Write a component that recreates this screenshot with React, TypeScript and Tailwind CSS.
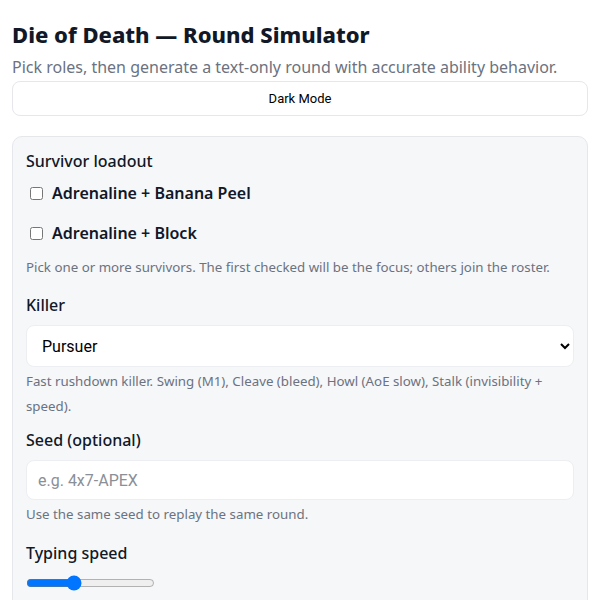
import { useState } from "react";

export default function App() {
  const [speed, setSpeed] = useState(35);
  const [killer, setKiller] = useState("pursuer");

  return (
    <div className="min-h-screen bg-white px-3 pt-[19px] font-['Noto_Sans',sans-serif] text-[#111827]">
      <h1 className="text-[22px] leading-[30px] font-extrabold">Die of Death — Round Simulator</h1>
      <p className="mt-[6px] text-[16px] leading-[24px] text-[#6b7280]">
        Pick roles, then generate a text-only round with accurate ability behavior.
      </p>
      <button className="mt-[2px] block h-[35px] w-full rounded-lg border border-[#e5e7eb] bg-white font-['Roboto',sans-serif] text-[13px] text-black">
        Dark Mode
      </button>

      <div className="mt-[20px] rounded-[10px] border border-[#e5e7eb] bg-[#f6f7f9] px-[13px] pt-[12px] pb-6">
        <div className="text-[16px] leading-[24px] font-medium">Survivor loadout</div>
        <label className="mt-[8px] flex h-[24px] items-center gap-[9px] text-[16px] font-semibold">
          <input type="checkbox" className="ml-1 h-[13px] w-[13px]" />
          Adrenaline + Banana Peel
        </label>
        <label className="mt-[16px] flex h-[24px] items-center gap-[9px] text-[16px] font-semibold">
          <input type="checkbox" className="ml-1 h-[13px] w-[13px]" />
          Adrenaline + Block
        </label>
        <p className="mt-[10px] text-[13.3px] leading-[25px] text-[#6b7280]">
          Pick one or more survivors. The first checked will be the focus; others join the roster.
        </p>

        <div className="mt-[13px] text-[16px] leading-[24px] font-medium">Killer</div>
        <select
          value={killer}
          onChange={(e) => setKiller(e.target.value)}
          className="mt-[8px] block h-[42px] w-full rounded-lg border border-[#eceef1] bg-white pl-[11px] pr-2 font-['Roboto',sans-serif] text-[16px] text-black"
        >
          <option value="pursuer">Pursuer</option>
        </select>
        <p className="mt-[2px] text-[13.3px] leading-[25px] text-[#6b7280]">
          Fast rushdown killer. Swing (M1), Cleave (bleed), Howl (AoE slow), Stalk (invisibility + speed).
        </p>

        <div className="mt-[9px] text-[16px] leading-[24px] font-medium">Seed (optional)</div>
        <input
          type="text"
          placeholder="e.g. 4x7-APEX"
          className="mt-[8px] block h-[40px] w-full rounded-lg border border-[#eceef1] bg-white px-[11px] font-['Roboto',sans-serif] text-[16px] placeholder:text-[#8a8f98]"
        />
        <p className="mt-[2px] text-[13.3px] leading-[25px] text-[#6b7280]">Use the same seed to replay the same round.</p>

        <div className="mt-[14px] text-[16px] leading-[24px] font-medium">Typing speed</div>
        <input
          type="range"
          min={0}
          max={100}
          value={speed}
          onChange={(e) => setSpeed(Number(e.target.value))}
          className="mt-[10px] block"
        />
      </div>
    </div>
  );
}
